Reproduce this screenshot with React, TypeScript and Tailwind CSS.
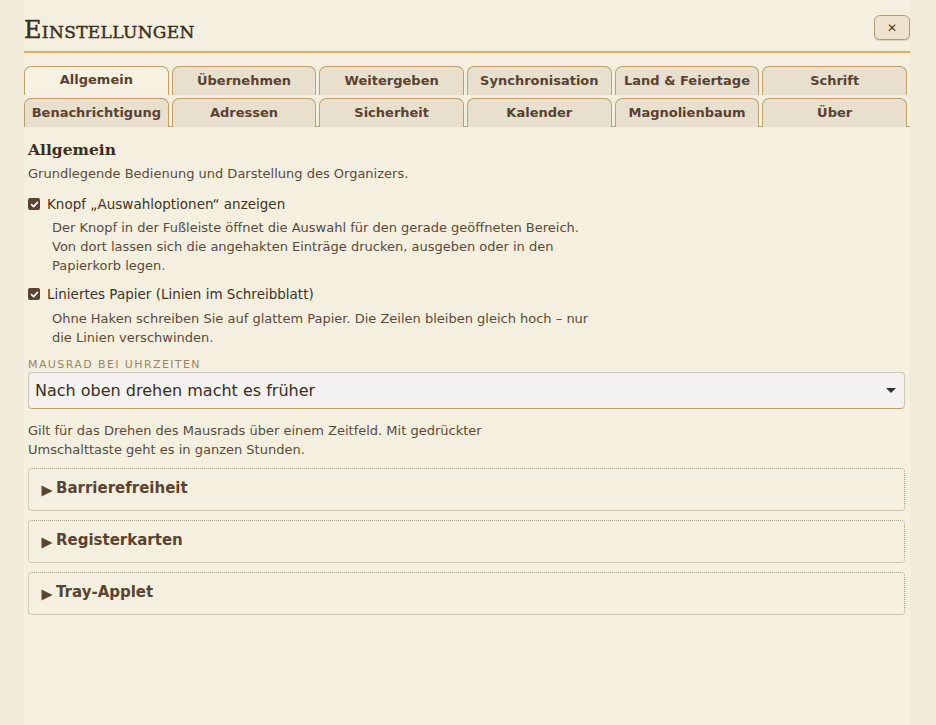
import React from "react";

const tabsTop = ["Allgemein", "Übernehmen", "Weitergeben", "Synchronisation", "Land & Feiertage", "Schrift"];
const tabsBottom = ["Benachrichtigung", "Adressen", "Sicherheit", "Kalender", "Magnolienbaum", "Über"];

function Tab({ label, active }: { label: string; active?: boolean }) {
  return (
    <div
      className={
        "h-[29px] flex items-center justify-center rounded-t-[7px] border border-b-0 border-[#bf9f6c] text-[13px] font-bold text-[#5a4230] " +
        (active ? "bg-[#f7f1e1] pb-[2px]" : "bg-[#e8dfcd]")
      }
    >
      {label}
    </div>
  );
}

function Check({ label }: { label: string }) {
  return (
    <div className="flex items-center gap-[7px] h-[20px]">
      <span className="w-[12px] h-[12px] rounded-[2px] bg-[#5a4330] flex items-center justify-center">
        <svg width="9" height="9" viewBox="0 0 10 10">
          <path d="M1.8 5.2 L4 7.3 L8.3 2.6" fill="none" stroke="#fff" strokeWidth="1.9" strokeLinecap="round" strokeLinejoin="round" />
        </svg>
      </span>
      <span className="text-[13.5px] text-[#3f3226]">{label}</span>
    </div>
  );
}

function Section({ title }: { title: string }) {
  return (
    <div className="h-[43px] rounded-[4px] border border-dotted border-[#b99c6c] flex items-center pl-[12px] pb-[2px]">
      <svg width="12" height="12" viewBox="0 0 12 12" className="mr-[3px] mt-[4px]">
        <path d="M0.5 0.5 L11.5 6 L0.5 11.5 Z" fill="#5a4330" />
      </svg>
      <span className="text-[15px] font-bold text-[#5a4330]">{title}</span>
    </div>
  );
}

export default function App() {
  return (
    <div
      className="w-[936px] h-[725px] bg-[#f2ebd9] text-[#5a4a3a] overflow-hidden"
      style={{ fontFamily: '"DejaVu Sans", sans-serif' }}
    >
      <div className="ml-[24px] w-[886px] h-full bg-[#f5efdf]">
        <div className="flex items-start justify-between h-[51px]">
          <h1
            className="text-[24px] text-[#3a2e22] mt-[12px] tracking-[0.35px] [-webkit-text-stroke:0.45px_#3a2e22]"
            style={{ fontFamily: '"DejaVu Serif", serif', fontVariant: "small-caps" }}
          >
            Einstellungen
          </h1>
          <button className="mt-[15px] w-[36px] h-[25px] rounded-[6px] border border-[#b49a72] bg-[#eee4cd] shadow-[0_1px_1px_rgba(0,0,0,0.15)] text-[12px] text-[#4a3a2a] flex items-center justify-center">
            ✕
          </button>
        </div>
        <div className="h-[2px] bg-[#dcb35c]" />

        <div className="mt-[13px] w-[883px] grid grid-cols-6 gap-x-[3px] gap-y-[3px]">
          {tabsTop.map((t, i) => (
            <Tab key={t} label={t} active={i === 0} />
          ))}
          {tabsBottom.map((t) => (
            <Tab key={t} label={t} />
          ))}
        </div>
        <div className="h-[1px] bg-[#bf9f6c] -mt-[1px]" />

        <div className="pl-[4px] pr-[5px]">
          <h2
            className="mt-[12px] text-[15.5px] font-bold text-[#3a2e22] leading-[22px]"
            style={{ fontFamily: '"DejaVu Serif", serif' }}
          >
            Allgemein
          </h2>
          <p className="mt-[3px] text-[13px] leading-[19px]">Grundlegende Bedienung und Darstellung des Organizers.</p>

          <div className="mt-[11px]">
            <Check label="Knopf „Auswahloptionen“ anzeigen" />
          </div>
          <p className="ml-[24px] mt-[4px] w-[540px] text-[13px] leading-[19px]">
            Der Knopf in der Fußleiste öffnet die Auswahl für den gerade geöffneten Bereich. Von dort lassen sich die angehakten Einträge drucken, ausgeben oder in den Papierkorb legen.
          </p>

          <div className="mt-[9px]">
            <Check label="Liniertes Papier (Linien im Schreibblatt)" />
          </div>
          <p className="ml-[24px] mt-[5px] w-[540px] text-[13px] leading-[19px]">
            Ohne Haken schreiben Sie auf glattem Papier. Die Zeilen bleiben gleich hoch – nur die Linien verschwinden.
          </p>

          <div className="mt-[10px] text-[11px] tracking-[1.4px] text-[#9a8566] leading-[15px]">MAUSRAD BEI UHRZEITEN</div>
          <div className="mt-0 h-[37px] rounded-[4px] border border-b-0 border-[#cfc6b4] shadow-[inset_0_-1px_0_#c39e62] bg-[#f3f2f0] flex items-center justify-between pl-[6px] pr-[8px]">
            <span className="text-[16px] text-[#3a2e22]">Nach oben drehen macht es früher</span>
            <svg width="10" height="6" viewBox="0 0 10 6">
              <path d="M0 0 H10 L5 5 Z" fill="#333" />
            </svg>
          </div>

          <p className="mt-[12px] w-[480px] text-[13px] leading-[19px]">
            Gilt für das Drehen des Mausrads über einem Zeitfeld. Mit gedrückter Umschalttaste geht es in ganzen Stunden.
          </p>

          <div className="mt-[9px] flex flex-col gap-[9px]">
            <Section title="Barrierefreiheit" />
            <Section title="Registerkarten" />
            <Section title="Tray-Applet" />
          </div>
        </div>
      </div>
    </div>
  );
}
